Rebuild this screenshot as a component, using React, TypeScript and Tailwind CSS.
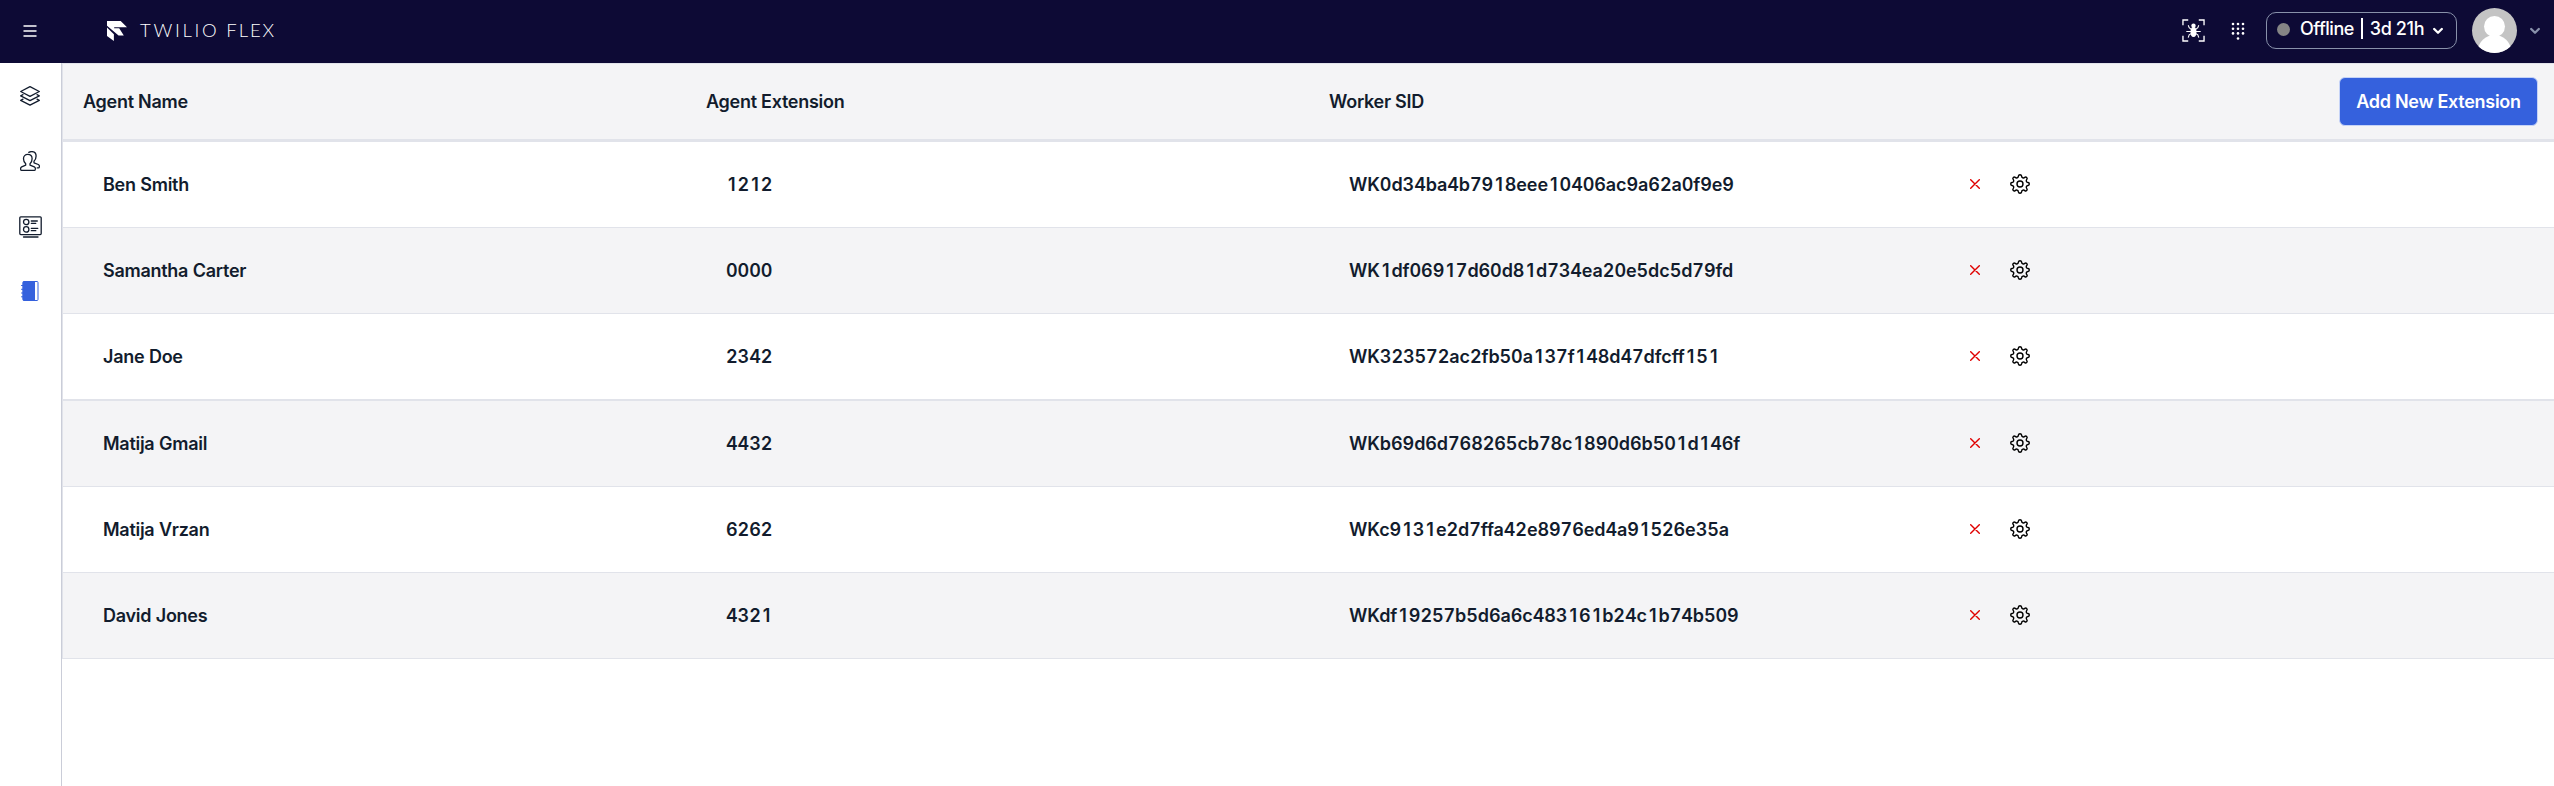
const rows = [
  { name: "Ben Smith", ext: "1212", sid: "WK0d34ba4b7918eee10406ac9a62a0f9e9" },
  { name: "Samantha Carter", ext: "0000", sid: "WK1df06917d60d81d734ea20e5dc5d79fd" },
  { name: "Jane Doe", ext: "2342", sid: "WK323572ac2fb50a137f148d47dfcff151" },
  { name: "Matija Gmail", ext: "4432", sid: "WKb69d6d768265cb78c1890d6b501d146f" },
  { name: "Matija Vrzan", ext: "6262", sid: "WKc9131e2d7ffa42e8976ed4a91526e35a" },
  { name: "David Jones", ext: "4321", sid: "WKdf19257b5d6a6c483161b24c1b74b509" },
];

function Logo() {
  return (
    <svg className="h-5 w-5" viewBox="0 0 20 20" fill="#fff">
      <path d="M0 0h13.700L20 6.200H7.200v1h5l4.600 7.200h-5.200L0 4.800z" />
      <path d="M0 6.600l6.900 6.700V20L0 15z" />
    </svg>
  );
}

function BugIcon() {
  return (
    <svg className="h-[23px] w-[23px]" viewBox="0 0 24 24" fill="none" stroke="#fff" strokeWidth="1.400">
      <path d="M1 6.500V1h5.500M17.500 1H23v5.500M23 17.500V23h-5.500M6.500 23H1v-5.500" />
      <circle cx="12" cy="7" r="2.300" fill="#fff" stroke="none" />
      <ellipse cx="12" cy="13.500" rx="3.100" ry="5.200" fill="#fff" stroke="none" />
      <path d="M10 11L7.500 9 6.500 6.500M14 11l2.500-2 1-2.500M9.500 13H4.500M14.500 13h5M10 15l-2.500 1.500-1 3M14 15l2.500 1.500 1 3" strokeWidth="1.100" />
    </svg>
  );
}

function DialpadIcon() {
  const dots = [2, 6.7, 11.4].flatMap((y) => [2, 7, 12].map((x) => [x, y]));
  return (
    <svg className="h-[19px] w-[14px]" viewBox="0 0 14 19" fill="#fff">
      {dots.map(([x, y]) => (
        <circle key={x + "-" + y} cx={x} cy={y} r="1.300" />
      ))}
      <circle cx="7" cy="16.500" r="1.300" />
    </svg>
  );
}

function Chevron({ className }: { className: string }) {
  return (
    <svg className={className} viewBox="0 0 10 8" fill="none" stroke="currentColor" strokeWidth="2.300" strokeLinecap="round" strokeLinejoin="round">
      <path d="M1.200 2L5 5.800 8.800 2" />
    </svg>
  );
}

function LayersIcon() {
  return (
    <svg className="h-5 w-5" viewBox="0 0 20 20" fill="none" stroke="#121c2d" strokeWidth="1.300" strokeLinejoin="round" strokeLinecap="round">
      <path d="M10 .7l9.300 4.800L10 10.300.7 5.500z" />
      <path d="M3 8.700L.7 9.900 10 14.700l9.300-4.800L17 8.700" />
      <path d="M3 13.200L.7 14.400 10 19.200l9.300-4.800-2.300-1.200" />
    </svg>
  );
}

function UsersIcon() {
  return (
    <svg className="h-5 w-5" viewBox="0 0 20 20" fill="none" stroke="#121c2d" strokeWidth="1.300" strokeLinejoin="round" strokeLinecap="round">
      <path d="M7.800 3.400c2.600 0 4.300 1.700 4.300 4.400 0 2.100-.8 3.800-2.100 4.900v1.500l4.300 1.700c.8.400 1.100.9 1.100 1.800 0 1-.3 1.600-.9 1.600H1.500c-.6 0-.9-.6-.9-1.600 0-.9.300-1.400 1.100-1.800l4-1.700v-1.500C4.400 11.600 3.500 9.900 3.500 7.800c0-2.700 1.700-4.400 4.300-4.400z" />
      <path d="M8.800 1.400C9.600.9 10.700.6 11.800.6c2.700 0 4.300 1.800 4.300 4.500 0 2.200-.8 4-2.100 5.200v1.500l4.300 1.700c.8.400 1.100.9 1.100 1.800 0 1-.3 1.600-.9 1.600h-1.300" />
    </svg>
  );
}

function ListIcon() {
  return (
    <svg className="h-[22px] w-[23px]" viewBox="0 0 23 22" fill="none" stroke="#121c2d" strokeWidth="1.300" strokeLinecap="round">
      <rect x=".8" y=".8" width="21.400" height="17.800" rx="1" />
      <circle cx="7.200" cy="6" r="2.700" />
      <circle cx="7.200" cy="13.400" r="2.700" />
      <path d="M12.300 5h6M12.300 7.300h4.500M12.300 12.300h6.500M12.300 14.700h4.500M4.500 21h14.500" />
    </svg>
  );
}

function BookIcon() {
  return (
    <svg className="h-5 w-[18px]" viewBox="0 0 18 20" fill="none" stroke="#3561dd">
      <rect x="1.800" y=".5" width="15.200" height="19" rx="1" />
      <path d="M2 .5h12v19H2z" fill="#3561dd" stroke="none" />
      <path d="M.5 4.500h3M.5 8.300h3M.5 12h3M.5 15.800h3" strokeLinecap="round" />
    </svg>
  );
}

function GearIcon() {
  return (
    <svg className="h-5 w-5" viewBox="0 0 20 20" fill="none" stroke="#000" strokeWidth="1.400" strokeLinejoin="round">
      <path d="M8.400 2.100Q8.600.7 10 .7t1.600 1.400q.1 1.300 1.200 1.700 1 .4 2-.4 1-.8 1.900.1.900.9.100 1.900-.8 1-.4 2 .4 1 1.600 1.100 1.300.1 1.300 1.500t-1.300 1.500q-1.200.1-1.600 1.100-.4 1 .4 2 .8 1-.1 1.900-.9.900-1.900.1-1-.8-2-.4-1.100.4-1.200 1.700-.2 1.400-1.600 1.400t-1.600-1.400q-.1-1.300-1.200-1.700-1-.4-2 .4-1 .8-1.900-.1-.9-.9-.1-1.900.8-1 .4-2-.4-1-1.600-1.100Q.7 11.400.7 10t1.300-1.500q1.200-.1 1.600-1.100.4-1-.4-2-.8-1 .1-1.900.9-.9 1.900-.1 1 .8 2 .4 1.100-.4 1.200-1.700z" />
      <circle cx="10" cy="10" r="3" />
    </svg>
  );
}

// Tabular figures, with the narrow "1" centred in a full digit cell instead of the footed form.
function Code({ value }: { value: string }) {
  return (
    <>
      {value.split(/(1)/).map((part, i) =>
        part === "1" ? (
          <span key={i} className="inline-block w-[11.600px] text-center normal-nums">1</span>
        ) : (
          part
        ),
      )}
    </>
  );
}

export default function App() {
  return (
    <div className="flex h-[786px] w-full flex-col overflow-hidden bg-white font-['Inter',sans-serif] text-[#121c2d]">
      <header className="flex h-[63px] shrink-0 items-center bg-[#0d0a35] text-white">
        <svg className="mb-[2px] ml-[23px] h-3 w-[14px]" viewBox="0 0 14 12" stroke="#fff" strokeWidth="1.300">
          <path d="M.5 1h13M.5 6h13M.5 11h13" />
        </svg>
        <div className="mb-px ml-[70px] flex items-center">
          <Logo />
          <span className="mb-[2px] ml-[13px] font-['Lato',sans-serif] text-[18.500px] leading-5 font-light tracking-[2.700px]">
            TWILIO<span className="tracking-[1.900px]"> FLEX</span>
          </span>
        </div>
        <div className="mb-[2px] ml-auto flex items-center">
          <BugIcon />
          <div className="mt-[2px] ml-[26px] flex"><DialpadIcon /></div>
          <div className="ml-[21px] flex h-[37px] w-[191px] items-center rounded-[10px] border border-[#8891aa] pl-[10px]">
            <span className="mb-[3px] h-[13px] w-[13px] rounded-full bg-[#858585]" />
            <span className="ml-[10px] pb-[3px] text-[18px] leading-6 font-medium tracking-[-0.480px] whitespace-nowrap">Offline</span>
            <span className="mb-[4px] ml-[7px] h-[21px] w-[2px] bg-white" />
            <span className="ml-[7px] pb-[3px] text-[18px] leading-6 font-medium tracking-[-0.400px] whitespace-nowrap">3d 21h</span>
            <Chevron className="ml-[9px] h-2 w-[10px] text-white" />
          </div>
          <svg className="ml-[15px] h-[45px] w-[45px] rounded-full bg-[#c4c4c4]" viewBox="0 0 45 45" fill="#fff">
            <circle cx="22.500" cy="18.500" r="10.500" />
            <ellipse cx="22.500" cy="43" rx="16.500" ry="16" />
          </svg>
          <Chevron className="mr-[14px] ml-[13px] h-2 w-[10px] text-[#8891aa]" />
        </div>
      </header>
      <div className="flex min-h-0 flex-1">
        <nav className="flex w-[62px] shrink-0 flex-col items-center border-r border-[#cacdd8] pt-[0.500px] pr-px">
          <div className="flex h-[65px] items-center"><LayersIcon /></div>
          <div className="flex h-[65px] items-center"><UsersIcon /></div>
          <div className="flex h-[65px] items-center pt-[1px]"><ListIcon /></div>
          <div className="flex h-[65px] items-center"><BookIcon /></div>
        </nav>
        <main className="flex min-w-0 flex-1 flex-col text-[18px] leading-6 font-semibold tracking-[-0.270px]">
          <div className="flex h-[79px] shrink-0 items-center border-t border-b-3 border-l border-t-[#e1e3ea] border-b-[#e1e3ea] border-l-[#e1e3ea] bg-[#f4f4f6] pl-[20px]">
            <div className="w-[623px]">Agent Name</div>
            <div className="w-[623px]">Agent Extension</div>
            <div className="flex-1">Worker SID</div>
            <button className="mr-4 h-[49px] w-[199px] rounded-md border border-[#c5d3f7] bg-[#3561dd] font-semibold tracking-[-0.280px] text-white">Add New Extension</button>
          </div>
          {rows.map((r, i) => (
            <div
              key={r.ext}
              className={
                "flex shrink-0 items-center border-l border-[#e1e3ea] pl-[40px] tabular-nums " +
                (i % 2 ? "bg-[#f4f4f6] " : "bg-white ") +
                (i === 2 ? "h-[87px] border-b-2" : "h-[86px] border-b")
              }
            >
              <div className="w-[623px]">{r.name}</div>
              <div className="w-[623px] tracking-[-0.080px]"><Code value={r.ext} /></div>
              <div className="w-[621px] tracking-[-0.080px]"><Code value={r.sid} /></div>
              <svg className="mb-px h-[10px] w-[10px]" viewBox="0 0 10 10" stroke="#e00000" strokeWidth="1.400" strokeLinecap="round">
                <path d="M.7.7l8.600 8.600M9.300.7L.7 9.300" />
              </svg>
              <div className="mb-px ml-[30px]"><GearIcon /></div>
            </div>
          ))}
        </main>
      </div>
    </div>
  );
}
